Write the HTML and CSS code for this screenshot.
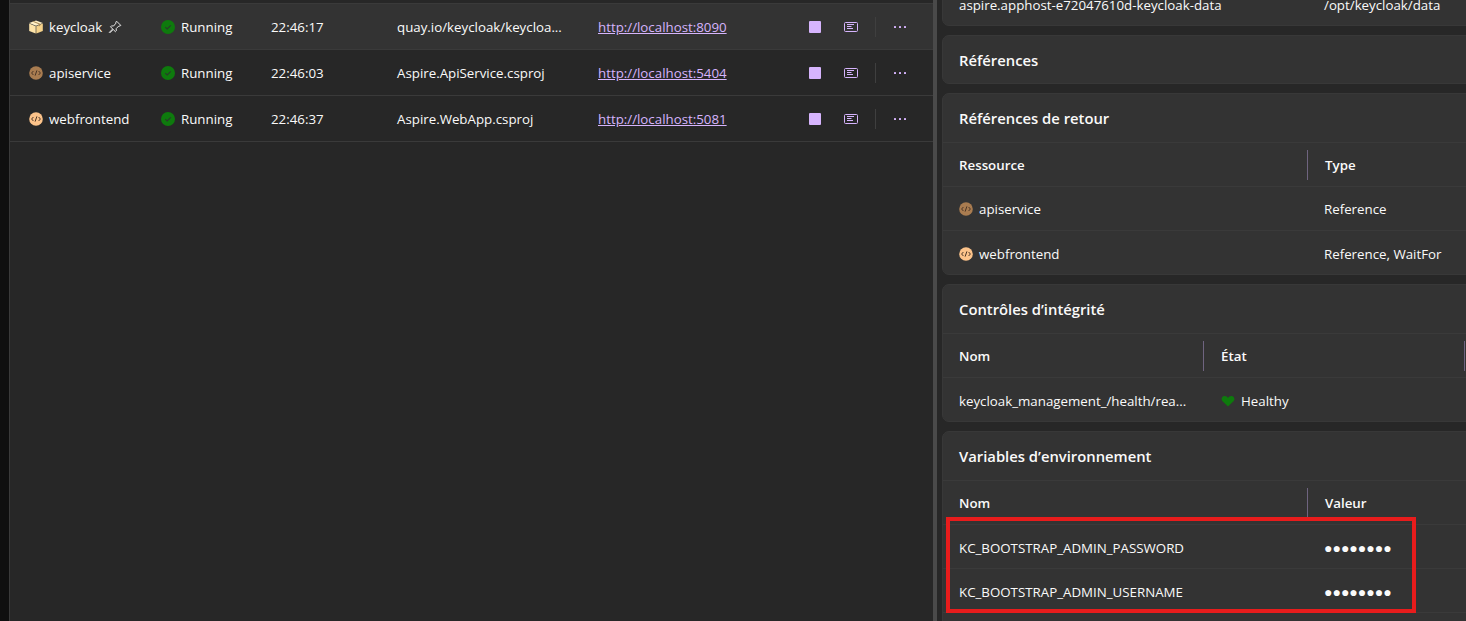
FILE: index.html
```html
<!DOCTYPE html>
<html lang="fr">

<head>
    <meta charset="UTF-8">
    <meta name="viewport" content="width=device-width, initial-scale=1.0">
    <title>Ressources</title>
    <link rel="stylesheet" href="styles.css">
</head>

<body>
    <svg class="defs" width="0" height="0" aria-hidden="true">
        <symbol id="code-badge" viewBox="0 0 14 14">
            <circle cx="7" cy="7" r="6.8" fill="currentColor"></circle>
            <path d="M4.400 5 2.600 7l1.800 2M9.600 5l1.800 2-1.800 2M7.900 4.400 6.100 9.600" fill="none" stroke="#4a3526" stroke-width="1"></path>
        </symbol>
        <symbol id="check-badge" viewBox="0 0 14 14">
            <circle cx="7" cy="7" r="7" fill="#0e7a0d"></circle>
            <path d="M4.300 7.200 6.200 9l3.600-3.600" fill="none" stroke="#2b3a2b" stroke-width="1.100"></path>
        </symbol>
        <symbol id="logs" viewBox="0 0 14 10">
            <rect x="0.5" y="0.5" width="13" height="9" rx="1" fill="none" stroke="currentColor"></rect>
            <path d="M3 2.500h7M3 4.500h4.500M3 6.500h6" fill="none" stroke="currentColor"></path>
        </symbol>
        <symbol id="dots" viewBox="0 0 12 2">
            <rect width="2" height="2" rx="0.5" fill="currentColor"></rect>
            <rect x="5" width="2" height="2" rx="0.5" fill="currentColor"></rect>
            <rect x="10" width="2" height="2" rx="0.5" fill="currentColor"></rect>
        </symbol>
    </svg>

    <main class="split">
        <section class="resources">
            <div class="rail"></div>
            <div class="grid">
                <div class="res-row res-row-active">
                    <div class="res-name">
                        <svg class="res-icon" viewBox="0 0 14 14">
                            <path d="M7 .4 13.800 3 7 5.800.2 3z" fill="#fff0c8"></path>
                            <path d="M.2 3.600 6.700 6.200v7.400L.2 11z" fill="#fde3a8"></path>
                            <path d="M13.800 3.600 7.300 6.200v7.400l6.500-2.600z" fill="#f5d28a"></path>
                            <path d="M3.200 1.500 9.800 4.200v2.200l1.400-.6V3.700L4.600 1z" fill="#a88a57"></path>
                        </svg>
                        <span>keycloak</span>
                        <svg class="pin" viewBox="0 0 14 14">
                            <path d="M8.600 1.200 12.800 5.400l-.9.7-1-.2-2.700 2.700.1 2.200-.9.9-2.200-2.200-3.400 3.400-.5-.5 3.400-3.400-2.200-2.200.9-.9 2.200.1L8 3.100l-.2-1z" fill="none" stroke="#e8e8e8" stroke-width="1" stroke-linejoin="round"></path>
                        </svg>
                    </div>
                    <div class="res-state"><svg class="res-icon"><use href="#check-badge"></use></svg><span>Running</span></div>
                    <div>22:46:17</div>
                    <div>quay.io/keycloak/keycloa...</div>
                    <a class="res-link" href="#">http://localhost:8090</a>
                    <div class="res-actions">
                        <span class="stop"></span>
                        <svg class="log-icon"><use href="#logs"></use></svg>
                        <span class="action-sep"></span>
                        <svg class="more"><use href="#dots"></use></svg>
                    </div>
                </div>
                <div class="res-row">
                    <div class="res-name">
                        <svg class="res-icon tone-api"><use href="#code-badge"></use></svg>
                        <span>apiservice</span>
                    </div>
                    <div class="res-state"><svg class="res-icon"><use href="#check-badge"></use></svg><span>Running</span></div>
                    <div>22:46:03</div>
                    <div>Aspire.ApiService.csproj</div>
                    <a class="res-link" href="#">http://localhost:5404</a>
                    <div class="res-actions">
                        <span class="stop"></span>
                        <svg class="log-icon"><use href="#logs"></use></svg>
                        <span class="action-sep"></span>
                        <svg class="more"><use href="#dots"></use></svg>
                    </div>
                </div>
                <div class="res-row">
                    <div class="res-name">
                        <svg class="res-icon tone-web"><use href="#code-badge"></use></svg>
                        <span>webfrontend</span>
                    </div>
                    <div class="res-state"><svg class="res-icon"><use href="#check-badge"></use></svg><span>Running</span></div>
                    <div>22:46:37</div>
                    <div>Aspire.WebApp.csproj</div>
                    <a class="res-link" href="#">http://localhost:5081</a>
                    <div class="res-actions">
                        <span class="stop"></span>
                        <svg class="log-icon"><use href="#logs"></use></svg>
                        <span class="action-sep"></span>
                        <svg class="more"><use href="#dots"></use></svg>
                    </div>
                </div>
            </div>
        </section>

        <div class="splitter"></div>

        <aside class="details">
            <div class="cards">
                <section class="card card-volumes">
                    <div class="cols cols-wide row">
                        <div>aspire.apphost-e72047610d-keycloak-data</div>
                        <div>/opt/keycloak/data</div>
                    </div>
                </section>

                <section class="card">
                    <h2 class="card-title card-title-solo">Références</h2>
                </section>

                <section class="card">
                    <h2 class="card-title card-title-line">Références de retour</h2>
                    <div class="cols cols-wide head">
                        <div class="col-sep">Ressource</div>
                        <div>Type</div>
                    </div>
                    <div class="cols cols-wide row">
                        <div class="cell-icon"><svg class="res-icon tone-api"><use href="#code-badge"></use></svg>apiservice</div>
                        <div>Reference</div>
                    </div>
                    <div class="cols cols-wide row row-last">
                        <div class="cell-icon"><svg class="res-icon tone-web"><use href="#code-badge"></use></svg>webfrontend</div>
                        <div>Reference, WaitFor</div>
                    </div>
                </section>

                <section class="card">
                    <h2 class="card-title card-title-line">Contrôles d’intégrité</h2>
                    <div class="cols cols-health head">
                        <div class="col-sep">Nom</div>
                        <div class="col-sep">État</div>
                    </div>
                    <div class="cols cols-health row row-last">
                        <div>keycloak_management_/health/rea...</div>
                        <div class="cell-icon">
                            <svg class="heart" viewBox="0 0 14 14">
                                <path d="M7 12.600 1.500 7.200C-.2 5.400.6 2.300 3.500 2.100 5 2 6.300 2.800 7 4c.7-1.200 2-2 3.500-1.900 2.900.2 3.700 3.300 2 5.100z" fill="#0e7a0d"></path>
                            </svg>Healthy
                        </div>
                    </div>
                </section>

                <section class="card card-env">
                    <h2 class="card-title card-title-line">Variables d’environnement</h2>
                    <div class="cols cols-wide head">
                        <div class="col-sep">Nom</div>
                        <div>Valeur</div>
                    </div>
                    <div class="cols cols-wide row">
                        <div>KC_BOOTSTRAP_ADMIN_PASSWORD</div>
                        <div class="masked">&#9679;&#9679;&#9679;&#9679;&#9679;&#9679;&#9679;&#9679;</div>
                    </div>
                    <div class="cols cols-wide row">
                        <div>KC_BOOTSTRAP_ADMIN_USERNAME</div>
                        <div class="masked">&#9679;&#9679;&#9679;&#9679;&#9679;&#9679;&#9679;&#9679;</div>
                    </div>
                    <div class="highlight"></div>
                </section>
            </div>
        </aside>
    </main>
</body>

</html>
```

FILE: styles.css
```css
* {
    box-sizing: border-box;
}

html,
body {
    height: 100%;
}

body {
    margin: 0;
    overflow: hidden;
    background-color: #272727;
    color: #fafafa;
    font-family: 'Open Sans', 'Roboto', sans-serif;
    font-size: 13.3px;
}

.defs {
    position: absolute;
}

.split {
    display: flex;
    height: 100%;
}

/* left pane */
.resources {
    display: flex;
    width: 933px;
    flex-shrink: 0;
}

.rail {
    width: 9px;
    background-color: #0f0f0f;
}

.grid {
    flex: 1;
    padding-top: 3px;
    border-left: 1px solid #3a3a3a;
}

.res-row {
    display: grid;
    grid-template-columns: 132px 110px 126px 201px 211px 1fr;
    align-items: center;
    height: 46px;
    padding-left: 19px;
    border-top: 1px solid #3a3a3a;
}

.res-row:last-child {
    height: 47px;
    border-bottom: 1px solid #3a3a3a;
}

.res-row-active {
    background-color: #333;
}

.res-name,
.res-state,
.cell-icon {
    display: flex;
    align-items: center;
    gap: 6px;
}

.res-icon {
    width: 14px;
    height: 14px;
    flex-shrink: 0;
}

.tone-api {
    color: #a97c50;
}

.tone-web {
    color: #fcc38a;
}

.pin {
    width: 14px;
    height: 14px;
}

.res-link {
    color: #d6b4fd;
    text-decoration: underline;
}

.res-actions {
    display: flex;
    align-items: center;
}

.stop {
    width: 12px;
    height: 12px;
    border-radius: 1px;
    background-color: #d6b4fd;
}

.log-icon {
    width: 14px;
    height: 10px;
    margin-left: 23px;
    color: #d6b4fd;
}

.action-sep {
    width: 1px;
    height: 20px;
    margin-left: 17px;
    background-color: #3f3f3f;
}

.more {
    width: 12px;
    height: 2px;
    margin-left: 18px;
    color: #d6b4fd;
}

.splitter {
    width: 4px;
    flex-shrink: 0;
    background-color: #4a4a4a;
}

/* right pane */
.details {
    flex: 1;
    min-width: 0;
    overflow: hidden;
    padding-left: 5px;
}

.cards {
    display: flex;
    flex-direction: column;
    gap: 9px;
    width: 620px;
    margin-top: -16px;
}

.card {
    border: 1px solid #383838;
    border-radius: 7px;
    background-color: #333;
}

.card-title {
    display: flex;
    align-items: center;
    height: 47px;
    margin: 0;
    padding-left: 16px;
    font-size: 14.8px;
    font-weight: 600;
}

.card-title-solo {
    padding-top: 1px;
}

.card-title-line {
    height: 49px;
    border-bottom: 1px solid #3a3a3a;
}

.cols {
    display: grid;
    align-items: center;
    height: 44px;
    padding-left: 16px;
}

.cols-wide {
    grid-template-columns: 349px 1fr;
}

.cols-health {
    grid-template-columns: 245px 261px;
}

.row {
    padding-top: 1px;
    border-bottom: 1px solid #3a3a3a;
}

.row-last {
    height: 43px;
    padding-top: 2px;
    border-bottom: 0;
}

.card-volumes .row {
    height: 40px;
    padding-top: 0;
    border-bottom: 0;
}

.card-env .row {
    padding-top: 2px;
}

.head {
    font-weight: 600;
    border-bottom: 1px solid #3a3a3a;
}

.col-sep {
    display: flex;
    align-items: center;
    height: 30px;
    border-right: 1px solid #6f6480;
}

.cols > div + div {
    padding-left: 16px;
}

.head > div + div {
    padding-left: 17px;
}

.heart {
    width: 14px;
    height: 14px;
}

.cols > .cell-icon {
    padding-left: 17px;
}

.cols > .cell-icon:first-child {
    padding-left: 0;
}

.cols > .masked {
    font-size: 14px;
}

.card-env {
    position: relative;
    height: 300px;
}

.highlight {
    position: absolute;
    top: 85px;
    left: 3px;
    width: 470px;
    height: 96px;
    border: 4px solid #e81c1c;
}
```
